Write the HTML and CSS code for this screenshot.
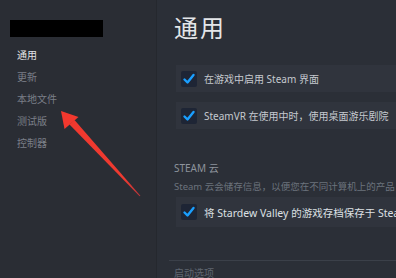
FILE: index.html
```html
<!DOCTYPE html>
<html lang="zh">
<head>
<meta charset="utf-8">
<link rel="stylesheet" href="styles.css">
</head>
<body>
<div class="app">
  <aside class="sidebar">
    <div class="redacted"></div>
    <nav class="nav">
      <div class="nav-item active">通用</div>
      <div class="nav-item">更新</div>
      <div class="nav-item">本地文件</div>
      <div class="nav-item">测试版</div>
      <div class="nav-item">控制器</div>
    </nav>
  </aside>
  <main class="content">
    <h1 class="title">通用</h1>
    <div class="rows">
      <div class="row"><span class="check"><svg viewBox="0 0 16 16" width="16" height="16"><path d="M3.5 8.5 L6.5 11.5 L12.5 4" fill="none" stroke="#1a9fff" stroke-width="2.4" stroke-linecap="round" stroke-linejoin="round"/></svg></span><span class="label">在游戏中启用 Steam 界面</span></div>
      <div class="row"><span class="check"><svg viewBox="0 0 16 16" width="16" height="16"><path d="M3.5 8.5 L6.5 11.5 L12.5 4" fill="none" stroke="#1a9fff" stroke-width="2.4" stroke-linecap="round" stroke-linejoin="round"/></svg></span><span class="label">SteamVR 在使用中时，使用桌面游乐剧院</span></div>
    </div>
    <section class="section">
      <div class="section-title">STEAM 云</div>
      <div class="section-desc">Steam 云会储存信息，以便您在不同计算机上的产品</div>
      <div class="row row-bright"><span class="check"><svg viewBox="0 0 16 16" width="16" height="16"><path d="M3.5 8.5 L6.5 11.5 L12.5 4" fill="none" stroke="#1a9fff" stroke-width="2.4" stroke-linecap="round" stroke-linejoin="round"/></svg></span><span class="label">将 Stardew Valley 的游戏存档保存于 Steam 云</span></div>
    </section>
    <div class="divider"></div>
    <div class="next-title">启动选项</div>
  </main>
</div>
<svg class="arrow" width="396" height="278" viewBox="0 0 396 278">
  <defs>
    <linearGradient id="fade" x1="61" y1="111" x2="140" y2="196" gradientUnits="userSpaceOnUse">
      <stop offset="0" stop-color="#f2382e"/>
      <stop offset="0.8" stop-color="#ee3a30"/>
      <stop offset="1" stop-color="#b8353a"/>
    </linearGradient>
  </defs>
  <polygon points="61,111 64.5,129 78.5,117" fill="#f2382e"/>
  <polygon points="69.5,124.5 74.5,120 140.4,195.7 139.6,196.3" fill="url(#fade)"/>
</svg>
</body>
</html>
```

FILE: styles.css
```css
html, body {
  margin: 0;
  padding: 0;
}
body {
  width: 396px;
  height: 278px;
  overflow: hidden;
  background: #2a2e36;
  font-family: "Noto Sans", "Noto Sans CJK SC", sans-serif;
  position: relative;
}
.app {
  display: flex;
  height: 278px;
}
.sidebar {
  width: 157px;
  flex: none;
  background: #2a2d34;
  border-right: 1px solid #25282e;
  padding-top: 20px;
  box-sizing: border-box;
}
.redacted {
  margin-left: 10px;
  width: 93px;
  height: 17px;
  background: #000;
}
.nav {
  margin-top: 7px;
  padding-left: 17px;
}
.nav-item {
  font-size: 10px;
  line-height: 22px;
  height: 22px;
  color: #7a7f88;
}
.nav-item.active {
  color: #e2e4e7;
}
.content {
  flex: 1;
  min-width: 0;
  padding-left: 17px;
  overflow: hidden;
  background: #2b2f37;
}
.title {
  margin: 13px 0 0 0;
  font-size: 24px;
  line-height: 30px;
  font-weight: 400;
  color: #e4e6e9;
  letter-spacing: 2px;
}
.rows {
  margin-top: 22px;
  display: flex;
  flex-direction: column;
  gap: 10px;
}
.row {
  display: flex;
  align-items: center;
  gap: 7px;
  height: 27px;
  margin-left: 2px;
  padding-left: 5px;
  background: #30343d;
  white-space: nowrap;
  overflow: hidden;
}
.check {
  flex: none;
  width: 16px;
  height: 16px;
  background: #1e2535;
  border-radius: 2px;
  display: flex;
}
.label {
  font-size: 10px;
  color: #c5c9cf;
}
.section {
  margin-top: 32px;
}
.section-title {
  font-size: 10px;
  line-height: 14px;
  color: #8d939c;
}
.section-desc {
  margin-top: 5px;
  font-size: 9.5px;
  line-height: 13px;
  color: #6c737d;
  white-space: nowrap;
}
.section .row {
  margin-top: 4px;
  height: 30px;
}
.row-bright .label {
  font-size: 10.5px;
  color: #dde0e4;
}
.divider {
  margin-top: 33px;
  margin-left: -5px;
  height: 1px;
  background: #3b4049;
}
.next-title {
  margin-top: 5px;
  font-size: 10px;
  line-height: 14px;
  color: #5f6670;
}
.arrow {
  position: absolute;
  left: 0;
  top: 0;
  pointer-events: none;
}
```
